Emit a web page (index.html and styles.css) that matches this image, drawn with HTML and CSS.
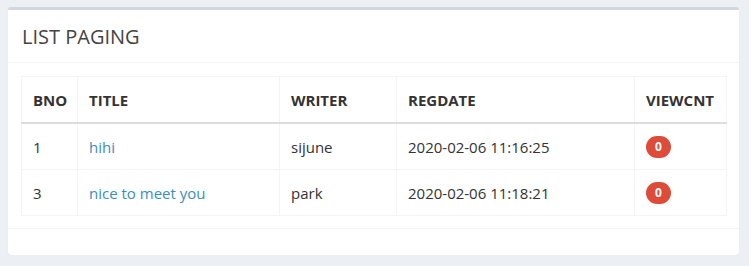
FILE: index.html
```html
<!DOCTYPE html>
<html lang="en">
<head>
    <meta charset="UTF-8">
    <meta name="viewport" content="width=device-width, initial-scale=1.0">
    <title>List Paging</title>
    <link rel="stylesheet" href="styles.css">
</head>
<body>
    <div class="box">
        <div class="box-header">
            <h3 class="box-title">LIST PAGING</h3>
        </div>
        <div class="box-body">
            <table class="table">
                <colgroup>
                    <col class="col-bno">
                    <col class="col-title">
                    <col class="col-writer">
                    <col class="col-regdate">
                    <col>
                </colgroup>
                <thead>
                    <tr>
                        <th>BNO</th>
                        <th>TITLE</th>
                        <th>WRITER</th>
                        <th>REGDATE</th>
                        <th>VIEWCNT</th>
                    </tr>
                </thead>
                <tbody>
                    <tr>
                        <td>1</td>
                        <td><a href="#">hihi</a></td>
                        <td>sijune</td>
                        <td>2020-02-06 11:16:25</td>
                        <td><span class="badge">0</span></td>
                    </tr>
                    <tr>
                        <td>3</td>
                        <td><a href="#">nice to meet you</a></td>
                        <td>park</td>
                        <td>2020-02-06 11:18:21</td>
                        <td><span class="badge">0</span></td>
                    </tr>
                </tbody>
            </table>
        </div>
        <div class="box-footer"></div>
    </div>
</body>
</html>
```

FILE: styles.css
```css
body {
    margin: 0;
    padding: 7px 10px 0 8px;
    background: #ecf0f5;
    font-family: "Open Sans", sans-serif;
    font-size: 15px;
    color: #333;
}
.box {
    background: #fff;
    border-top: 3px solid #d2d6de;
    border-radius: 3px;
    box-shadow: 0 1px 1px rgba(0, 0, 0, 0.1);
}
.box-header {
    padding: 0 14px;
    height: 52px;
    display: flex;
    align-items: center;
    border-bottom: 1px solid #f4f4f4;
}
.box-title {
    margin: 0;
    font-size: 20px;
    font-weight: normal;
    color: #444;
}
.box-body {
    padding: 13px 12px 12px 13px;
}
.table {
    width: 100%;
    table-layout: fixed;
    border-collapse: collapse;
    border: 1px solid #f4f4f4;
}
.table th,
.table td {
    border: 1px solid #f4f4f4;
    padding: 0 11px;
    height: 45px;
    text-align: left;
    vertical-align: middle;
    white-space: nowrap;
}
.table th {
    font-weight: bold;
    border-bottom: 2px solid #ddd;
}
.col-bno {
    width: 56px;
}
.col-title {
    width: 202px;
}
.col-writer {
    width: 117px;
}
.col-regdate {
    width: 238px;
}
a {
    color: #3c8dbc;
    text-decoration: none;
}
.badge {
    display: inline-block;
    min-width: 25px;
    height: 22px;
    line-height: 22px;
    border-radius: 11px;
    background: #dd4b39;
    color: #fff;
    font-size: 12px;
    font-weight: bold;
    text-align: center;
}
.box-footer {
    height: 26px;
    border-top: 1px solid #f4f4f4;
}
```
